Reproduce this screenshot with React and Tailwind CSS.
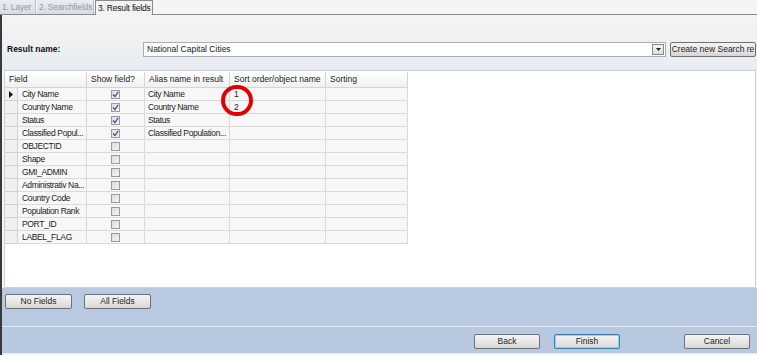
import React from "react";

const rows = [
  ["City Name", true, "City Name", "1"],
  ["Country Name", true, "Country Name", "2"],
  ["Status", true, "Status", ""],
  ["Classified Popul...", true, "Classified Population...", ""],
  ["OBJECTID", false, "", ""],
  ["Shape", false, "", ""],
  ["GMI_ADMIN", false, "", ""],
  ["Administrativ Na...", false, "", ""],
  ["Country Code", false, "", ""],
  ["Population Rank", false, "", ""],
  ["PORT_ID", false, "", ""],
  ["LABEL_FLAG", false, "", ""],
];

function Check({ on }) {
  return (
    <div className="w-[9px] h-[9px] border border-[#9a9a9a] bg-gradient-to-br from-[#dcdcdc] to-[#f4f4f4] flex items-center justify-center">
      {on && (
        <svg width="7" height="7" viewBox="0 0 7 7">
          <path d="M1 3.5 L3 5.5 L6.2 0.8" stroke="#3a4f86" strokeWidth="1.2" fill="none" />
        </svg>
      )}
    </div>
  );
}

function Btn({ children, className = "", focus }) {
  return (
    <div
      className={`h-[15px] flex items-center justify-center whitespace-nowrap rounded-[2px] border ${
        focus ? "border-[#3c7fb1] shadow-[inset_0_0_0_1px_#8fd3f5]" : "border-[#707070]"
      } bg-gradient-to-b from-[#f3f3f3] via-[#e8e8e8] to-[#d6d6d6] text-[#1e1e1e] ${className}`}
    >
      {children}
    </div>
  );
}

export default function App() {
  return (
    <div
      className="relative w-[757px] h-[355px] overflow-hidden bg-[#f4f4f4] text-[8.5px] leading-none text-[#222] whitespace-nowrap"
      style={{ fontFamily: '"Liberation Sans", Arial, sans-serif' }}
    >
      {/* tabs */}
      <div className="h-[15px] flex items-end border-b border-[#8a8a8a] bg-[#f4f4f4]">
        <div className="h-[14px] w-[36px] flex items-center pl-[2px] tracking-[-0.2px] text-[#9a9a9a] bg-gradient-to-b from-[#e9eef4] to-[#d5dde8] border-r border-[#b8c0cc]">1. Layer</div>
        <div className="h-[14px] w-[57px] ml-[1px] flex items-center pl-[2px] tracking-[-0.2px] text-[#9a9a9a] bg-gradient-to-b from-[#e9eef4] to-[#d5dde8] border-r border-[#b8c0cc]">2. Searchfields</div>
        <div className="h-[15px] w-[58px] ml-[1px] -mb-[1px] flex items-center pl-[2px] tracking-[-0.2px] bg-[#f2f2f2] border border-b-0 border-[#8a8a8a] text-[#111]">3. Result fields</div>
      </div>

      {/* panel */}
      <div className="h-[340px] flex flex-col border-l-2 border-[#3a3a3a]">
        {/* result name area */}
        <div className="h-[55px] bg-gradient-to-b from-[#f4f4f4] to-[#e8ecf0] flex items-center pt-[14px]">
          <div className="w-[141px] pl-[5px] font-bold text-[#111]">Result name:</div>
          <div className="w-[523px] h-[15px] border border-[#abadb3] bg-white flex items-center justify-between pl-[3px] pr-[1px]">
            <span>National Capital Cities</span>
            <div className="w-[12px] h-[11px] border border-[#8a8a8a] bg-gradient-to-b from-[#f6f6f6] to-[#dcdcdc] flex items-center justify-center">
              <svg width="5" height="3" viewBox="0 0 5 3"><path d="M0 0 H5 L2.5 3 Z" fill="#222" /></svg>
            </div>
          </div>
          <Btn className="ml-[4px] w-[86px] overflow-hidden">Create new Search re</Btn>
        </div>

        {/* grid */}
        <div className="h-[218px] ml-[2px] mr-[1px] bg-white border border-[#c9d2dc] pt-[1px]">
          <div className="w-[404px]">
            <div className="flex h-[16px]">
              {[
                ["Field", 82],
                ["Show field?", 58],
                ["Alias name in result", 85],
                ["Sort order/object name", 96],
                ["Sorting", 82],
              ].map(([t, w]) => (
                <div
                  key={t}
                  style={{ width: w }}
                  className="h-full flex items-center pl-[4px] border-r border-b border-[#d5d5d5] bg-gradient-to-b from-[#ffffff] to-[#f0f0f0]"
                >
                  {t}
                </div>
              ))}
            </div>
            {rows.map(([f, on, alias, sort], i) => (
              <div key={i} className="flex h-[13px]">
                <div className="w-[13px] h-full border-r border-b border-[#d2d2d2] bg-[#f0f0f0] flex items-center justify-center">
                  {i === 0 && (
                    <svg width="4" height="7" viewBox="0 0 4 7"><path d="M0 0 L4 3.5 L0 7 Z" fill="#111" /></svg>
                  )}
                </div>
                <div className="w-[69px] h-full border-r border-b border-[#dadada] bg-[#f7f7f7] flex items-center pl-[4px] tracking-[-0.35px] overflow-hidden">{f}</div>
                <div className="w-[58px] h-full border-r border-b border-[#dadada] bg-[#f7f7f7] flex items-center justify-center pr-[1px]">
                  <Check on={on} />
                </div>
                <div className="w-[85px] h-full border-r border-b border-[#dadada] bg-[#f7f7f7] flex items-center pl-[3px] tracking-[-0.35px] overflow-hidden">{alias}</div>
                <div className="w-[96px] h-full border-r border-b border-[#dadada] bg-[#f7f7f7] flex items-center pl-[4px]">{sort}</div>
                <div className="w-[82px] h-full border-r border-b border-[#dadada] bg-[#f7f7f7]"></div>
              </div>
            ))}
          </div>
        </div>

        {/* field buttons */}
        <div className="h-[38px] bg-[#b9cae0] flex items-start pt-[6px] pl-[3px] gap-[12px]">
          <Btn className="w-[67px]">No Fields</Btn>
          <Btn className="w-[67px]">All Fields</Btn>
        </div>

        {/* bottom bar */}
        <div className="h-[28px] border-t border-b border-[#e4ecf5] bg-[#b7c8df] flex items-start pt-[7px]">
          <div className="ml-[472px]"><Btn className="w-[66px]">Back</Btn></div>
          <div className="ml-[14px]"><Btn focus className="w-[66px]">Finish</Btn></div>
          <div className="ml-[64px]"><Btn className="w-[66px]">Cancel</Btn></div>
        </div>
      </div>

      {/* red annotation circle */}
      <div className="absolute left-[221px] top-[85px] w-[32px] h-[31px] rounded-full border-4 border-[#e00000]" />
    </div>
  );
}
